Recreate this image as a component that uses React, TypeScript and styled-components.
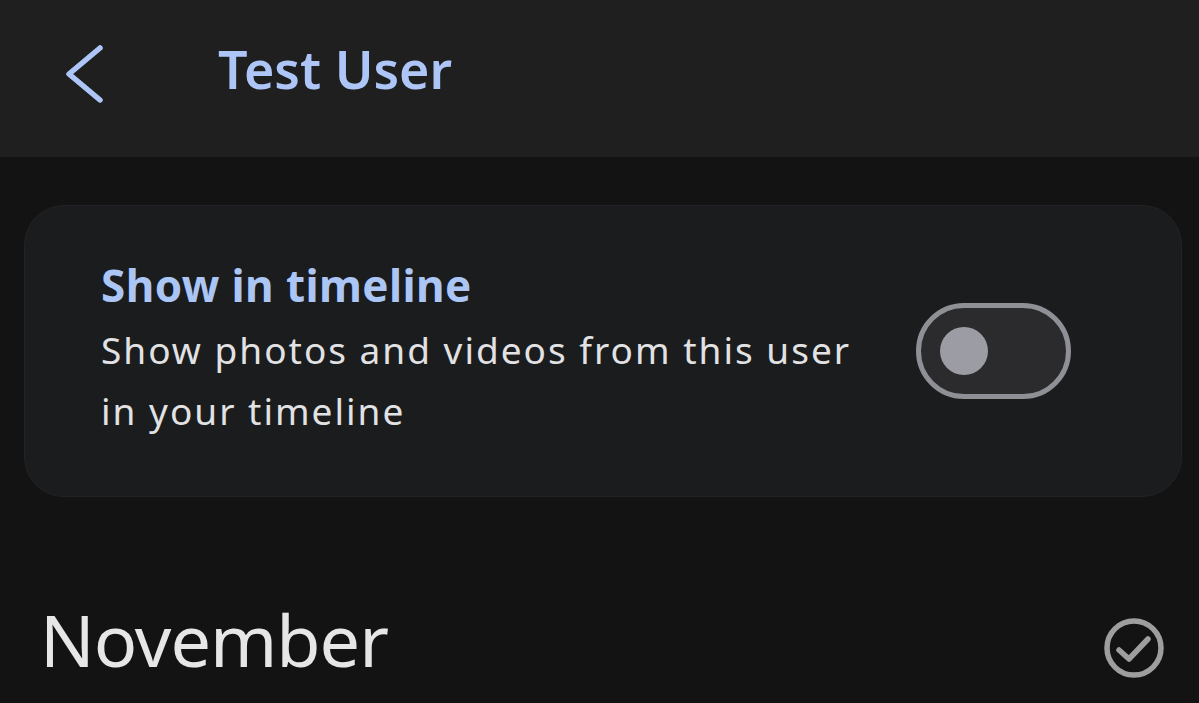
import React from "react";
import styled, { createGlobalStyle } from "styled-components";

const Global = createGlobalStyle`
  html, body { margin: 0; padding: 0; background: #131313; }
  body { width: 1199px; height: 703px; overflow: hidden; font-family: "Noto Sans", "Open Sans", sans-serif; }
`;

const Page = styled.div`
  width: 1199px;
  height: 703px;
  display: flex;
  flex-direction: column;
  background: #131313;
`;

const Header = styled.header`
  height: 157px;
  flex: none;
  background: #1f1f1f;
  display: flex;
  align-items: center;
  padding: 0 0 8px 0;
  box-sizing: border-box;
`;

const BackButton = styled.button`
  width: 218px;
  height: 64px;
  flex: none;
  background: none;
  border: 0;
  padding: 0 0 0 65px;
  display: flex;
  align-items: center;
  justify-content: flex-start;
  cursor: pointer;
`;

const Title = styled.h1`
  margin: 0 0 12px 0;
  font-size: 52px;
  font-weight: 600;
  color: #adc6f7;
  letter-spacing: 0;
  line-height: 1;
`;

const Content = styled.main`
  padding: 48px 17px 0 24px;
  display: flex;
  flex-direction: column;
`;

const Card = styled.section`
  height: 292px;
  box-sizing: border-box;
  border-radius: 40px;
  background: #1b1c1e;
  border: 1px solid #222326;
  display: flex;
  align-items: center;
  padding: 0 110px 0 76px;
  gap: 40px;
`;

const CardText = styled.div`
  flex: 1;
  display: flex;
  flex-direction: column;
  margin-top: -4px;
`;

const CardTitle = styled.div`
  font-size: 44px;
  font-weight: 700;
  color: #abc5f5;
  line-height: 60px;
  letter-spacing: 0.4px;
  margin-top: -2px;
  margin-bottom: 4px;
`;

const CardSub = styled.div`
  font-size: 37px;
  font-weight: 400;
  color: #e2e2e4;
  line-height: 61px;
  letter-spacing: 2px;
  max-width: 770px;
`;

const Toggle = styled.div<{ $on: boolean }>`
  width: 155px;
  height: 96px;
  box-sizing: border-box;
  border-radius: 48px;
  border: 5px solid #8f9095;
  background: #2b2b2d;
  flex: none;
  display: flex;
  align-items: center;
  justify-content: ${(p) => (p.$on ? "flex-end" : "flex-start")};
  padding: 0 19px;
`;

const Knob = styled.div`
  width: 48px;
  height: 48px;
  border-radius: 50%;
  background: #9c9ca4;
`;

const MonthRow = styled.div`
  display: flex;
  align-items: center;
  justify-content: space-between;
  padding: 101px 0 0 16px;
`;

const Month = styled.h2`
  margin: 0;
  font-size: 72px;
  font-weight: 400;
  color: #e6e6e6;
  line-height: 1;
  letter-spacing: -1px;
`;

const CheckWrap = styled.div`
  width: 64px;
  height: 64px;
  display: flex;
  align-items: center;
  justify-content: center;
  margin: 18px 16px 0 0;
`;

export default function App() {
  return (
    <Page>
      <Global />
      <Header>
        <BackButton aria-label="Back">
          <svg width="40" height="64" viewBox="0 0 40 64">
            <path
              d="M35 5 L4 31 L35 57"
              fill="none"
              stroke="#adc6f7"
              strokeWidth="5.5"
              strokeLinecap="round"
              strokeLinejoin="round"
            />
          </svg>
        </BackButton>
        <Title>Test User</Title>
      </Header>
      <Content>
        <Card>
          <CardText>
            <CardTitle>Show in timeline</CardTitle>
            <CardSub>Show photos and videos from this user in your timeline</CardSub>
          </CardText>
          <Toggle $on={false}>
            <Knob />
          </Toggle>
        </Card>
        <MonthRow>
          <Month>November</Month>
          <CheckWrap>
            <svg width="64" height="64" viewBox="0 0 64 64">
              <circle cx="32" cy="32" r="27" fill="none" stroke="#9e9e9e" strokeWidth="5.5" />
              <path
                d="M17 34 L27 43 L46 23"
                fill="none"
                stroke="#9e9e9e"
                strokeWidth="5.5"
                strokeLinecap="round"
                strokeLinejoin="round"
              />
            </svg>
          </CheckWrap>
        </MonthRow>
      </Content>
    </Page>
  );
}
